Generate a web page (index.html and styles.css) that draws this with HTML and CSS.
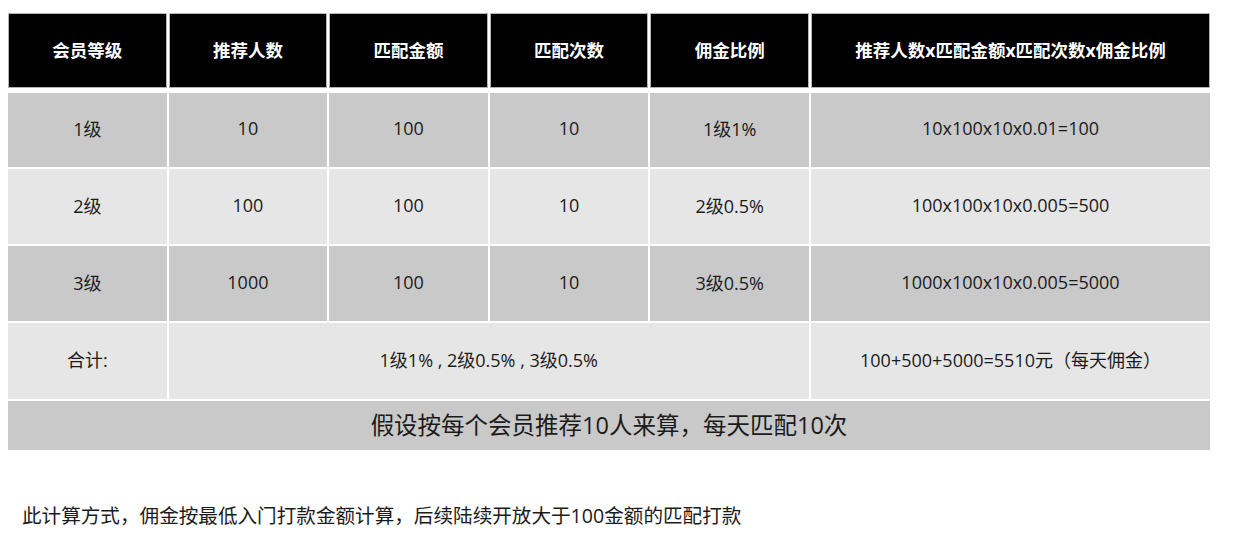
FILE: index.html
```html
<!DOCTYPE html>
<html lang="zh-CN">
<head>
<meta charset="utf-8">
<title>会员等级佣金</title>
<link rel="stylesheet" href="styles.css">
</head>
<body>
<div class="sheet">
  <div class="grid">
    <div class="cell head">会员等级</div>
    <div class="cell head">推荐人数</div>
    <div class="cell head">匹配金额</div>
    <div class="cell head">匹配次数</div>
    <div class="cell head">佣金比例</div>
    <div class="cell head">推荐人数x匹配金额x匹配次数x佣金比例</div>

    <div class="cell dark">1级</div>
    <div class="cell dark">10</div>
    <div class="cell dark">100</div>
    <div class="cell dark">10</div>
    <div class="cell dark">1级1%</div>
    <div class="cell dark">10x100x10x0.01=100</div>

    <div class="cell light">2级</div>
    <div class="cell light">100</div>
    <div class="cell light">100</div>
    <div class="cell light">10</div>
    <div class="cell light">2级0.5%</div>
    <div class="cell light">100x100x10x0.005=500</div>

    <div class="cell dark">3级</div>
    <div class="cell dark">1000</div>
    <div class="cell dark">100</div>
    <div class="cell dark">10</div>
    <div class="cell dark">3级0.5%</div>
    <div class="cell dark">1000x100x10x0.005=5000</div>

    <div class="cell light total">合计:</div>
    <div class="cell light total span4">1级1% , 2级0.5% , 3级0.5%</div>
    <div class="cell light total">100+500+5000=5510元（每天佣金）</div>

    <div class="cell banner">假设按每个会员推荐10人来算，每天匹配10次</div>
  </div>
  <p class="note">此计算方式，佣金按最低入门打款金额计算，后续陆续开放大于100金额的匹配打款</p>
</div>
</body>
</html>
```

FILE: styles.css
```css
html, body {
  margin: 0;
  padding: 0;
  background: #ffffff;
}

body {
  font-family: "Open Sans", "Noto Sans CJK SC", sans-serif;
  color: #1b1b1b;
}

.sheet {
  padding: 13px 0 0 8px;
}

.grid {
  display: grid;
  width: 1202px;
  grid-template-columns: 158.6px 158.6px 158.6px 158.6px 158.6px 1fr;
  grid-template-rows: 78px 74px 75px 75px 76px 49px;
  column-gap: 2px;
  row-gap: 2px;
}

.cell {
  display: flex;
  align-items: center;
  justify-content: center;
  font-size: 18px;
  box-sizing: border-box;
  white-space: nowrap;
  padding-bottom: 4px;
}

.head {
  background: #000000;
  color: #ffffff;
  font-size: 17.5px;
  font-weight: 700;
  border: 1px solid #b4b4b4;
  margin-bottom: 3px;
  padding-bottom: 2px;
}

.dark {
  background: #c9c9c9;
}

.light {
  background: #e6e6e6;
}

.total {
  padding-bottom: 4px;
}

.span4 {
  grid-column: span 4;
}

.banner {
  grid-column: 1 / -1;
  background: #c9c9c9;
  font-size: 23.5px;
  padding-bottom: 3px;
}

.note {
  margin: 52px 0 0 14px;
  font-size: 19.6px;
  line-height: 28px;
  color: #1b1b1b;
}
```
